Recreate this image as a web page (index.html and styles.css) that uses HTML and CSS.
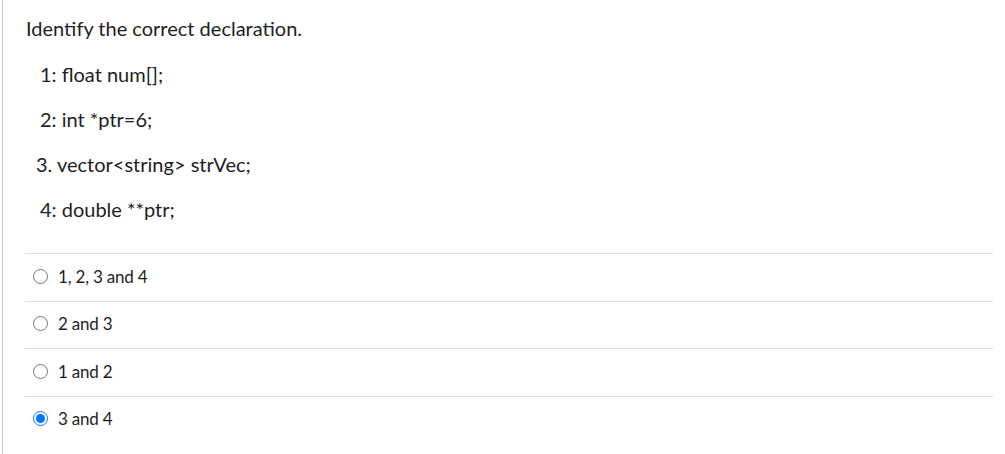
FILE: index.html
```html
<!DOCTYPE html>
<html>
<head>
<meta charset="utf-8">
<link rel="stylesheet" href="styles.css">
</head>
<body>
<div class="question">
  <div class="qtext">
    <p class="title">Identify the correct declaration.</p>
    <p class="code">1: float num[];</p>
    <p class="code">2: int *ptr=6;</p>
    <p class="code code-alt">3. vector&lt;string&gt; strVec;</p>
    <p class="code">4: double **ptr;</p>
  </div>
  <div class="answers">
    <label class="option"><input type="radio" name="a"><span>1, 2, 3 and 4</span></label>
    <label class="option"><input type="radio" name="a"><span>2 and 3</span></label>
    <label class="option"><input type="radio" name="a"><span>1 and 2</span></label>
    <label class="option"><input type="radio" name="a" checked><span>3 and 4</span></label>
  </div>
</div>
</body>
</html>
```
FILE: styles.css
```css
html, body {
  margin: 0;
  padding: 0;
  background: #fff;
}
body {
  font-family: Lato, "Liberation Sans", sans-serif;
  color: #1e1e1e;
  width: 1005px;
  height: 454px;
  overflow: hidden;
}
.question {
  margin-left: 2px;
  border-left: 1px solid #c9c9c9;
  padding: 14px 12px 0 22px;
  height: 454px;
  box-sizing: border-box;
}
.qtext p {
  margin: 0;
}
.title {
  font-size: 20px;
  line-height: 28px;
  padding-left: 1px;
}
.code {
  font-size: 20px;
  line-height: 24px;
  margin-top: 21px !important;
  padding-left: 15px;
}
.qtext .title + .code {
  margin-top: 20px !important;
}
.code-alt {
  padding-left: 11px;
}
.answers {
  margin-top: 32px;
}
.option {
  display: flex;
  align-items: center;
  gap: 10px;
  height: 47.5px;
  box-sizing: border-box;
  border-top: 1px solid #dedede;
  padding-left: 8px;
  padding-bottom: 2px;
  font-size: 17px;
  letter-spacing: -0.2px;
}
.option input {
  width: 15px;
  height: 15px;
  margin: 0;
  accent-color: #0075ff;
}
```
